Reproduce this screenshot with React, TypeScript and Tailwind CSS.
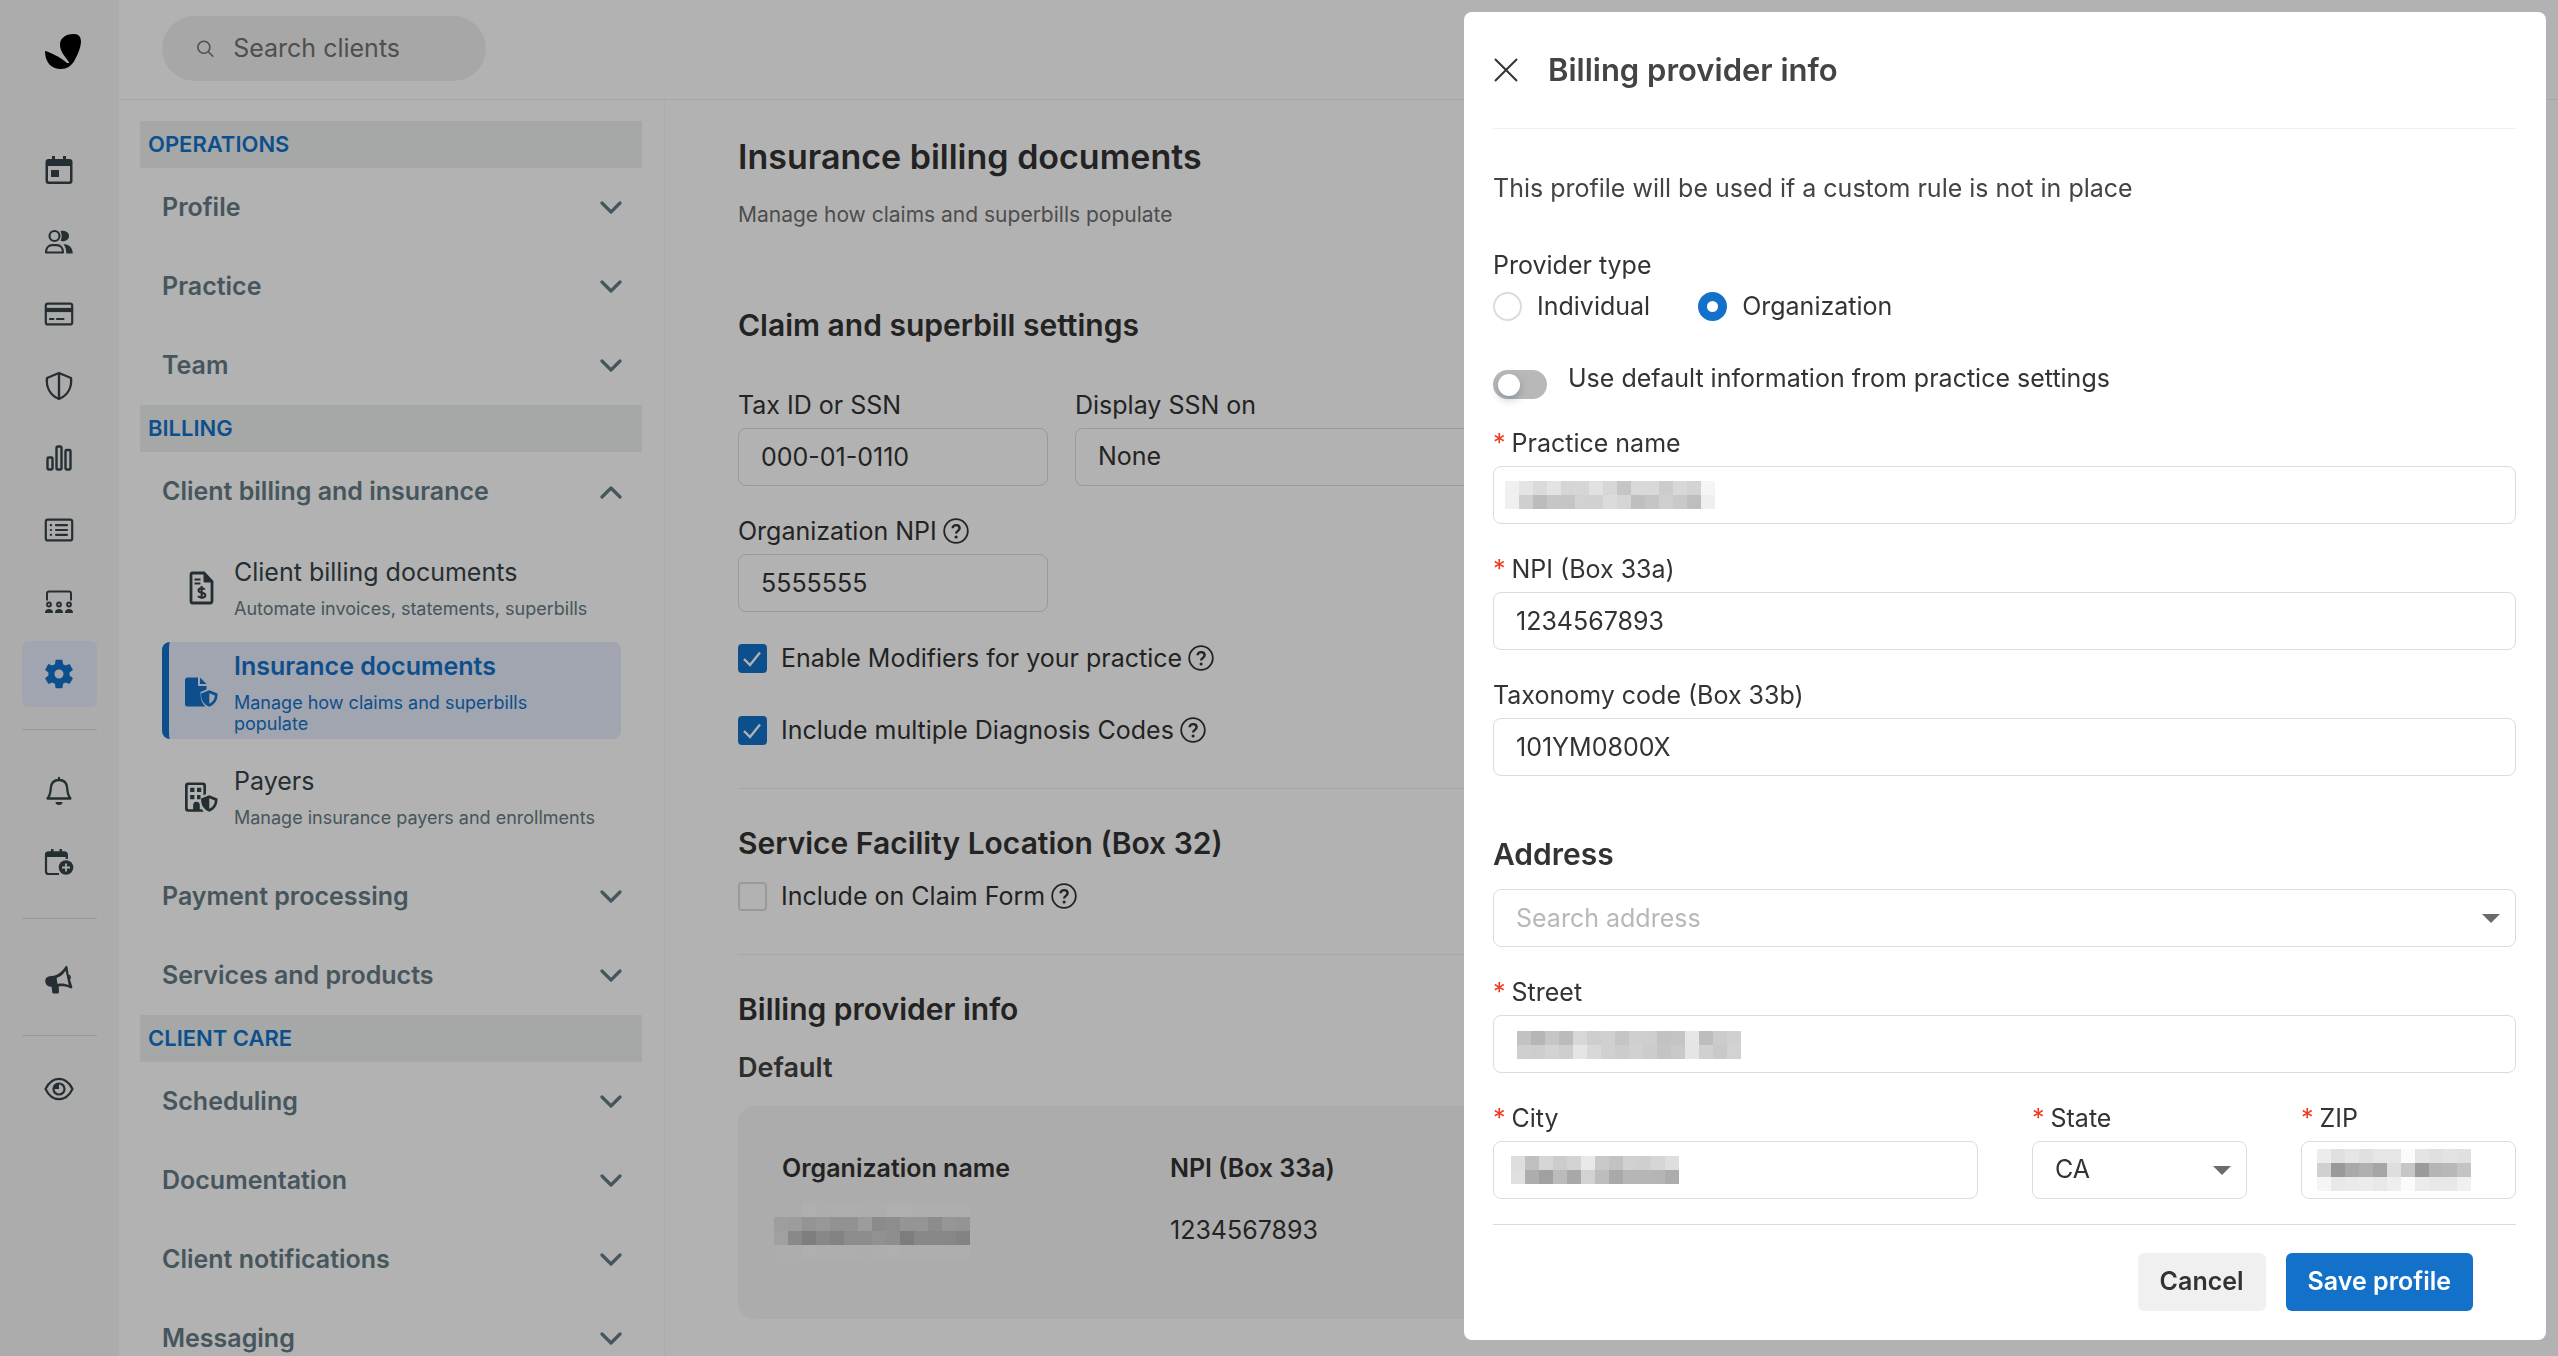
import React, { useState } from 'react';
import clsx from 'clsx';

interface IconProps {
  className?: string;
}

const LogoIcon = () => (
  <svg width="36" height="35" viewBox="0 0 36 35" fill="#000">
    <path d="M0 17C5 18 15 23 22 29L24.5 29C20 22 15 18 15 10.500C15 3 22 0 29 0C34 0 36 3 36 8C35.500 15 32 22 29 27.500C26 32 22 35 16 35C6 35 0 28 0 17Z" />
  </svg>
);

const SearchIcon = () => (
  <svg width="20" height="20" viewBox="0 0 20 20" fill="none" stroke="currentColor" strokeWidth="1.8">
    <circle cx="8" cy="8" r="7" />
    <path d="M13 13l6 6" />
  </svg>
);

const CalendarIcon = () => (
  <svg width="30" height="30" viewBox="0 0 30 30" fill="currentColor">
    <path fillRule="evenodd" d="M8 1h3v3h8V1h3v3h3.500A3 3 0 0 1 28.500 7v19a3 3 0 0 1-3 3h-21a3 3 0 0 1-3-3V7a3 3 0 0 1 3-3H8zM4 11v14.500a1 1 0 0 0 1 1h20a1 1 0 0 0 1-1V11z" />
    <rect x="7" y="15" width="8" height="7" />
  </svg>
);

const ClientsIcon = () => (
  <svg width="30" height="30" viewBox="0 0 30 30" fill="none" stroke="currentColor" strokeWidth="2.2">
    <circle cx="10.500" cy="9" r="5" />
    <path d="M2 25.500c0-5 3-7.300 6-7.300h5c3 0 6 2.300 6 7.300z" strokeLinejoin="round" />
    <path d="M16.500 4.200c2.500-1 8.500 0 8.500 4.800s-6 6-8.500 4.800c1.600-2.500 1.600-6.500 0-9.600zM19.500 17.200c5 0 9 2.500 9.300 9.400h-6.500c0-4-.8-7-2.800-9.400z" fill="currentColor" stroke="none" />
  </svg>
);

const CardIcon = () => (
  <svg width="30" height="30" viewBox="0 0 30 30" fill="none" stroke="currentColor" strokeWidth="2.200">
    <rect x="1.800" y="4.600" width="26.400" height="20.800" rx="2" />
    <path d="M2 11h26" strokeWidth="4.200" />
    <path d="M6 20h3.500M13 20h6.500" strokeLinecap="round" />
  </svg>
);

const ShieldIcon = () => (
  <svg width="30" height="30" viewBox="0 0 30 30" fill="none" stroke="currentColor" strokeWidth="2.400" strokeLinejoin="round">
    <path d="M15 2L27 7C28 16 24 24 15 28C6 24 2 16 3 7Z" />
    <path d="M15 2v26" />
  </svg>
);

const ChartIcon = () => (
  <svg width="30" height="30" viewBox="0 0 30 30" fill="none" stroke="currentColor" strokeWidth="2.400">
    <rect x="3.500" y="14.500" width="5" height="12" rx="1.200" />
    <rect x="12.500" y="3.500" width="5" height="23" rx="1.500" />
    <rect x="21.500" y="7" width="5" height="19.500" rx="1.200" />
  </svg>
);

const ListIcon = () => (
  <svg width="30" height="30" viewBox="0 0 30 30" fill="none" stroke="currentColor" strokeWidth="2.200" strokeLinecap="round">
    <rect x="1.800" y="4.600" width="26.400" height="20.800" rx="2" />
    <path d="M6.800 10.200h.3M6.800 15h.3M6.800 19.800h.3M12 10.200h11M12 15h11M12 19.800h11" />
  </svg>
);

const GroupIcon = () => (
  <svg width="30" height="30" viewBox="0 0 30 30" fill="none" stroke="currentColor" strokeWidth="2">
    <path d="M3 13.500V6.500q0-2 2-2h20q2 0 2 2v7" />
    <circle cx="5" cy="17.500" r="1.900" />
    <circle cx="15" cy="17.500" r="1.900" />
    <circle cx="25" cy="17.500" r="1.900" />
    <path d="M1 26c0-3 1.500-4 4-4s4 1 4 4zM11 26c0-3 1.500-4 4-4s4 1 4 4zM21 26c0-3 1.500-4 4-4s4 1 4 4z" fill="currentColor" stroke="none" />
  </svg>
);

const GearIcon = () => (
  <svg width="34" height="34" viewBox="0 0 24 24" fill="currentColor">
    <path d="M19.430 12.980c.040-.320.070-.640.070-.980s-.030-.660-.070-.980l2.110-1.650c.190-.150.240-.420.120-.640l-2-3.460c-.120-.220-.390-.300-.610-.220l-2.490 1c-.520-.400-1.080-.730-1.690-.980l-.380-2.650C14.460 2.180 14.250 2 14 2h-4c-.250 0-.460.180-.490.420l-.380 2.650c-.610.250-1.170.590-1.690.980l-2.490-1c-.230-.090-.490 0-.610.220l-2 3.460c-.130.220-.070.490.120.640l2.110 1.650c-.040.320-.070.650-.070.980s.030.660.070.980l-2.110 1.650c-.190.150-.240.420-.120.640l2 3.460c.120.220.390.300.610.220l2.490-1c.520.400 1.080.730 1.690.980l.380 2.650c.030.240.240.420.490.420h4c.250 0 .460-.180.490-.420l.380-2.650c.610-.250 1.170-.590 1.690-.980l2.490 1c.230.090.490 0 .610-.220l2-3.460c.120-.220.070-.490-.120-.640l-2.110-1.650zM12 15.200c-1.770 0-3.200-1.430-3.200-3.200s1.430-3.200 3.200-3.200 3.200 1.430 3.200 3.200-1.430 3.200-3.200 3.200z" />
  </svg>
);

const BellIcon = () => (
  <svg width="30" height="30" viewBox="0 0 30 30" fill="none" stroke="currentColor" strokeWidth="2.300" strokeLinejoin="round" strokeLinecap="round">
    <path d="M3.500 22.500C6.500 19 6.500 16 6.800 12C7.200 6.500 10.500 4 15 4s7.800 2.500 8.200 8c.3 4 .3 7 3.300 10.500zM15 2v2" />
    <path d="M11.500 26h7a3.500 3 0 0 1-7 0z" fill="currentColor" stroke="none" />
  </svg>
);

const CalendarPlusIcon = () => (
  <svg width="30" height="30" viewBox="0 0 30 30" fill="none" stroke="currentColor">
    <path d="M15 26H4.500Q2 26 2 23.500V6.500Q2 4.500 4.500 4.500H20Q22.800 4.500 22.800 7v4" strokeWidth="2.200" />
    <path d="M2 5q0-1.500 2-1.500h3V1h2.500v2.500h6V1H18v2.500h3q2.500 0 2.500 2.500v3H1z" fill="currentColor" stroke="none" />
    <circle cx="22" cy="19.500" r="7.300" fill="currentColor" stroke="none" />
    <path d="M22 15.500v8M18 19.500h8" stroke="#f7f7f7" strokeWidth="1.800" />
  </svg>
);

const MegaphoneIcon = () => (
  <svg width="30" height="30" viewBox="0 0 30 30" fill="currentColor">
    <path fillRule="evenodd" d="M21.500 1.200c.9-.5 1.900 0 2.100 1l1 7.300c2.300.7 3 3.500 1.400 5l2.300 7.300c.3 1.200-.8 2-1.900 1.500-4.200-2.100-8.200-2.400-11.700-1.700l.3 5.300c0 1.100-.6 1.600-1.600 1.600h-3.500c-1 0-1.600-.5-1.700-1.500l-.6-5.200c-3.300.2-5.700-1.500-6.200-4.500-.6-3.600 1-5.500 4.200-6l4-.6c5.100-.9 9.300-5 11.900-9.500zM12.600 12.900l1 6c4-.8 8-.2 11.200 1.200L21.600 5.700c-2.100 3.200-5 6.100-9 7.200z" />
  </svg>
);

const EyeIcon = () => (
  <svg width="30" height="30" viewBox="0 0 30 30" fill="none" stroke="currentColor" strokeWidth="2.200">
    <path d="M1.500 15C8 1.500 22 1.500 28.500 15C22 28.500 8 28.500 1.500 15Z" strokeLinejoin="round" />
    <circle cx="15" cy="15" r="5.500" />
    <path d="M15 15V9a6 6 0 0 0-6 6z" fill="currentColor" stroke="none" />
  </svg>
);

const InvoiceIcon = () => (
  <svg width="34" height="34" viewBox="0 0 34 34" fill="none" stroke="currentColor">
    <path d="M20 2H8.500Q7 2 7 4v26q0 2 1.500 2h17.500q2 0 2-2V10.500z" strokeWidth="2.800" />
    <path d="M20 1v10h9z" fill="currentColor" strokeWidth="1" />
    <path d="M10.500 8.500h6M10.500 12.500h6" strokeWidth="2.200" />
    <path d="M20.800 18.500c-1-1.500-6.300-1.800-6.300 1 0 3 6.800 1.500 6.800 4.700 0 3.200-6 2.800-7.300.8M17.600 15v13" strokeWidth="2.100" />
  </svg>
);

const FileShieldIcon = () => (
  <svg width="34" height="34" viewBox="0 0 34 34" fill="currentColor">
    <path d="M3.500 2.500H14v8.500h8.500v3.500l-6 2.500c0 5 .5 10.500 5 14.500h-18Q1 31.500 1 29V5Q1 2.500 3.500 2.500zM16 2.500l6.500 6.500H16z" />
    <path fillRule="evenodd" d="M25.300 15.300l8.200 3.200c.3 6-2.200 10.800-8.200 13.300-6-2.500-8.500-7.300-8.200-13.300zM25.300 18.200v10.500c3.700-2 5.500-4.500 5.500-8.300z" />
  </svg>
);

const BuildingShieldIcon = () => (
  <svg width="34" height="34" viewBox="0 0 34 34" fill="currentColor">
    <path fillRule="evenodd" d="M4 2.500h15q3 0 3 3v8.800l-2.600.9V6.500q0-1.400-1.400-1.400H5.200Q3.700 5.100 3.700 6.500v21.500q0 1.300 1.500 1.300h4V25.500a3.200 3.500 0 0 1 6.400 0v3.800h2.200l2 2.500H4q-3 0-3-3V5.500q0-3 3-3z" />
    <path d="M6.200 7.800h4.200V12H6.200zM13 7.800h4.200V12H13zM6.200 15h4.200v4.200H6.200zM13 15h3.500v4.200H13zM9.500 31v-6a3 3.200 0 0 1 6 0v6z" />
    <path fillRule="evenodd" d="M25.300 15.300l8.200 3.200c.3 6-2.200 10.800-8.200 13.300-6-2.500-8.500-7.300-8.200-13.300zM25.300 18.200v10.500c3.700-2 5.500-4.500 5.500-8.300z" />
  </svg>
);

const Chevron = ({ className }: IconProps) => (
  <svg className={className} width="22" height="14" viewBox="0 0 22 14" fill="none" stroke="currentColor" strokeWidth="3.200" strokeLinecap="round" strokeLinejoin="round">
    <path d="M2 2l9 9 9-9" />
  </svg>
);

const Caret = () => (
  <svg className="pointer-events-none absolute right-4 top-1/2 -mt-1" width="18" height="9" viewBox="0 0 18 9" fill="#6b6b6b">
    <path d="M0 0h18L9 9z" />
  </svg>
);

const HelpIcon = () => (
  <svg width="26" height="26" viewBox="0 0 26 26" fill="none" stroke="currentColor">
    <circle cx="13" cy="13" r="11.800" strokeWidth="1.800" />
    <path d="M9.600 10.300c0-4.300 7-4.300 7 0 0 2.600-3.500 2.600-3.500 5.200" strokeWidth="2.400" />
    <circle cx="13.100" cy="19" r="1.600" fill="currentColor" stroke="none" />
  </svg>
);

// Hidden values are shown as blocks of grey, one array per row
const Mosaic = ({ rows, className }: { rows: string[][]; className?: string }) => (
  <div className={clsx('pointer-events-none', className)} aria-hidden="true">
    {rows.map((row, i) => (
      <div key={i} className="flex">
        {row.map((color, j) => (
          <span key={j} className="size-[14px]" style={{ backgroundColor: `#${color}` }} />
        ))}
      </div>
    ))}
  </div>
);

const toRow = (colors: string) => colors.split(' ');

const orgRows = [
  toRow('f6f6f6 f6f6f6 fbfbfb f8f8f8 f9f9f9 fafafa f8f8f8 f8f8f8 fbfbfb fbfbfb fafafa f9f9f9 fafafa fafafa'),
  toRow('e3e3e3 e0e0e0 d5d5d5 dadada d2d2d2 d1d1d1 e0e0e0 c8c8c8 cbcbcb d6d6d6 d6d6d6 c9c9c9 d7d7d7 d4d4d4'),
  toRow('e6e6e6 c5c5c5 b5b5b5 c2c2c2 bbbbbb c9c9c9 c9c9c9 d0d0d0 cccccc b4b4b4 c3c3c3 c3c3c3 c2c2c2 bcbcbc'),
  toRow('f8f8f8 f8f8f8 fbfbfb f9f9f9 fafafa fafafa f8f8f8 f9f9f9 fbfbfb fafafa fafafa f9f9f9 fafafa fafafa'),
];
const practiceRows = [
  toRow('f0f0f0 e4e4e4 dadada e3e3e3 d5d5d5 d6d6d6 e1e1e1 d7d7d7 c5c5c5 d9d9d9 d9d9d9 cccccc d8d8d8 d3d3d3 f5f5f5'),
  toRow('f0f0f0 cfcfcf bcbcbc c6c6c6 c5c5c5 d2d2d2 d1d1d1 dbdbdb d5d5d5 bfbfbf c5c5c5 cfcfcf c9c9c9 bebebe efefef'),
];
const streetRows = [
  toRow('c2c2c2 b6b6b6 c6c6c6 bbbbbb d7d7d7 cecece d0d0d0 c5c5c5 cfcfcf cecece c2c2c2 c4c4c4 e6e6e6 bdbdbd cbcbcb d0d0d0'),
  toRow('cfcfcf cdcdcd d3d3d3 cecece e5e5e5 d8d8d8 d0d0d0 cccccc d1d1d1 cccccc c4c4c4 c9c9c9 e5e5e5 d0d0d0 c9c9c9 d2d2d2'),
];
const cityRows = [
  toRow('dedede c0c0c0 d6d6d6 cccccc d3d3d3 e9e9e9 c9c9c9 c2c2c2 d1d1d1 cfcfcf d6d6d6 dedede'),
  toRow('e0e0e0 adadad a0a0a0 bbbbbb a8a8a8 d2d2d2 bdbdbd a9a9a9 b6b6b6 b6b6b6 b5b5b5 acacac'),
];
const zipRows = [
  toRow('ececec e0e0e0 e6e6e6 e0e0e0 e6e6e6 e6e6e6 fbfbfb e4e4e4 e0e0e0 e3e3e3 e0e0e0'),
  toRow('d0d0d0 999999 a9a9a9 b0b0b0 a5a5a5 dedede c6c6c6 9a9a9a b5b5b5 b8b8b8 c4c4c4'),
  toRow('f5f5f5 e8e8e8 eaeaea ececec e8e8e8 eeeeee fbfbfb ebebeb e8e8e8 e8e8e8 f0f0f0'),
];

const mainNav = [
  { label: 'Calendar', icon: <CalendarIcon /> },
  { label: 'Clients', icon: <ClientsIcon /> },
  { label: 'Billing', icon: <CardIcon /> },
  { label: 'Insurance', icon: <ShieldIcon /> },
  { label: 'Analytics', icon: <ChartIcon /> },
  { label: 'Activity', icon: <ListIcon /> },
  { label: 'Team', icon: <GroupIcon /> },
  { label: 'Settings', icon: <GearIcon />, active: true },
];

const NavIcon = ({ label, icon, active }: { label: string; icon: React.ReactNode; active?: boolean }) => (
  <a
    href="#"
    aria-label={label}
    className={clsx(
      'flex h-[66px] w-full shrink-0 items-center justify-center rounded-md pr-px',
      active ? 'bg-[#e6edfb] text-[#1471ca]' : 'text-[#364449]'
    )}
  >
    {icon}
  </a>
);

const Sidebar = () => (
  <nav className="flex w-[119px] shrink-0 flex-col bg-[#f7f7f7] px-[22px]">
    <a href="#" aria-label="Home" className="mt-[34px] flex pl-[23px]">
      <LogoIcon />
    </a>
    <div className="mt-[68px] flex flex-col gap-[6px]">
      {mainNav.map((item) => (
        <NavIcon key={item.label} {...item} />
      ))}
    </div>
    <hr className="mb-7 mt-[22px] border-[#dcdcdc]" />
    <div className="flex flex-col gap-[6px]">
      <NavIcon label="Notifications" icon={<BellIcon />} />
      <NavIcon label="Requests" icon={<CalendarPlusIcon />} />
    </div>
    <hr className="mb-7 mt-[22px] border-[#dcdcdc]" />
    <NavIcon label="Announcements" icon={<MegaphoneIcon />} />
    <hr className="mb-5 mt-[22px] border-[#dcdcdc]" />
    <NavIcon label="Preview" icon={<EyeIcon />} />
  </nav>
);

const SectionTitle = ({ children }: { children: React.ReactNode }) => (
  <h3 className="flex h-[47px] items-center bg-[#edf1f0] px-2 text-[22px] font-semibold text-[#1471ca]">{children}</h3>
);

const SectionItem = ({ title, open }: { title: string; open?: boolean }) => (
  <button
    type="button"
    aria-expanded={!!open}
    className="flex h-[79px] w-full items-center justify-between pl-[22px] pr-5 text-[25px] font-semibold text-[#657b85]"
  >
    {title}
    <Chevron className={open ? 'rotate-180' : ''} />
  </button>
);

interface SubItemProps {
  title: string;
  text: string;
  icon: React.ReactNode;
  active?: boolean;
}

const SubItem = ({ title, text, icon, active }: SubItemProps) => (
  <a
    href="#"
    className={clsx(
      'flex items-center rounded-lg border-l-[7px] pb-[5px] pl-[15px] pr-5 pt-2',
      active ? 'border-[#1471ca] bg-[#e6edfb] text-[#1471ca]' : 'border-transparent text-[#364449]'
    )}
  >
    <span className="mr-4 shrink-0">{icon}</span>
    <span>
      <span className={clsx('block text-[25px] leading-[32px]', active && 'font-semibold')}>{title}</span>
      <span className={clsx('mt-[10px] block text-[18px] leading-[21px]', !active && 'text-[#657b85]')}>{text}</span>
    </span>
  </a>
);

const SettingsMenu = () => (
  <aside className="w-[546px] shrink-0 overflow-hidden border-r border-[#f7f7f7] pl-[21px] pr-[22px] pt-[21px]">
    <SectionTitle>OPERATIONS</SectionTitle>
    <SectionItem title="Profile" />
    <SectionItem title="Practice" />
    <SectionItem title="Team" />
    <SectionTitle>BILLING</SectionTitle>
    <SectionItem title="Client billing and insurance" open />
    <div className="flex flex-col gap-[18px] pb-6 pl-[22px] pr-[21px] pt-[17px]">
      <SubItem title="Client billing documents" text="Automate invoices, statements, superbills" icon={<InvoiceIcon />} />
      <SubItem title="Insurance documents" text="Manage how claims and superbills populate" icon={<FileShieldIcon />} active />
      <SubItem title="Payers" text="Manage insurance payers and enrollments" icon={<BuildingShieldIcon />} />
    </div>
    <SectionItem title="Payment processing" />
    <SectionItem title="Services and products" />
    <SectionTitle>CLIENT CARE</SectionTitle>
    <SectionItem title="Scheduling" />
    <SectionItem title="Documentation" />
    <SectionItem title="Client notifications" />
    <SectionItem title="Messaging" />
  </aside>
);

const inputClass =
  'h-[58px] w-full appearance-none rounded-lg border border-[#dcdcdc] bg-white px-[22px] text-[25px] text-[#333] placeholder:text-[#b8b8b8] outline-none';

interface FieldProps {
  id: string;
  label: string;
  required?: boolean;
  help?: boolean;
  className?: string;
  children: React.ReactNode;
}

const Field = ({ id, label, required, help, className, children }: FieldProps) => (
  <div className={className}>
    <label htmlFor={id} className="mb-[6px] flex h-[34px] items-center gap-[6px] text-[25px] leading-8">
      {required && <span className="text-[#ee3a1f]">*</span>}
      {label}
      {help && <HelpIcon />}
    </label>
    <div className="relative">{children}</div>
  </div>
);

const CheckRow = ({ id, label, checked }: { id: string; label: string; checked?: boolean }) => (
  <div className="flex items-center text-[25px] leading-8">
    <span className="relative flex size-[29px]">
      <input
        id={id}
        type="checkbox"
        defaultChecked={checked}
        className="size-[29px] appearance-none rounded-[4px] border-2 border-[#dcdcdc] bg-white checked:border-[#1471ca] checked:bg-[#1471ca]"
      />
      {checked && (
        <svg className="pointer-events-none absolute inset-0" width="29" height="29" viewBox="0 0 29 29" fill="none" stroke="#fff" strokeWidth="2.400">
          <path d="M6 15l6 6L22 8.500" />
        </svg>
      )}
    </span>
    <label htmlFor={id} className="ml-[14px] mr-[6px]">{label}</label>
    <HelpIcon />
  </div>
);

const MainContent = () => (
  <main className="flex-1 overflow-hidden pl-[73px] pr-[60px] pt-[35px] text-[#333]">
    <h1 className="text-[34px] font-semibold leading-[44px]">Insurance billing documents</h1>
    <p className="mt-[23px] text-[21px] leading-[26px] text-[#6f6f6f]">Manage how claims and superbills populate</p>

    <h2 className="mt-[77px] text-[30px] font-semibold leading-[40px]">Claim and superbill settings</h2>
    <div className="mt-[43px] grid grid-cols-[310px_640px] gap-x-[27px] gap-y-7">
      <Field id="tax-id" label="Tax ID or SSN">
        <input id="tax-id" className={inputClass} defaultValue="000-01-0110" />
      </Field>
      <Field id="display-ssn" label="Display SSN on">
        <select id="display-ssn" className={inputClass} defaultValue="None">
          <option>None</option>
        </select>
      </Field>
      <Field id="org-npi" label="Organization NPI" help>
        <input id="org-npi" className={inputClass} defaultValue="5555555" />
      </Field>
    </div>
    <div className="mt-[30px] flex flex-col gap-10">
      <CheckRow id="modifiers" label="Enable Modifiers for your practice" checked />
      <CheckRow id="diagnosis" label="Include multiple Diagnosis Codes" checked />
    </div>

    <hr className="mt-[42px] border-[#efefef]" />
    <h2 className="mt-[34px] text-[30px] font-semibold leading-[40px]">Service Facility Location (Box 32)</h2>
    <div className="mt-[17px]">
      <CheckRow id="claim-form" label="Include on Claim Form" />
    </div>

    <hr className="mt-[42px] border-[#efefef]" />
    <h2 className="mt-[34px] text-[30px] font-semibold leading-[40px]">Billing provider info</h2>
    <h3 className="mt-[21px] text-[27px] font-semibold leading-[36px] text-[#424242]">Default</h3>
    <div className="mt-5 rounded-2xl bg-[#f7f7f7] px-11 pb-[71px] pt-[44px]">
      <table className="text-left text-[25px] leading-[36px]">
        <thead>
          <tr>
            <th className="w-[388px] font-semibold">Organization name</th>
            <th className="font-semibold">NPI (Box 33a)</th>
          </tr>
        </thead>
        <tbody>
          <tr>
            <td className="relative pt-[26px]">
              <Mosaic rows={orgRows} className="absolute -left-2 bottom-[-11px]" />
            </td>
            <td className="pt-[26px]">1234567893</td>
          </tr>
        </tbody>
      </table>
    </div>
  </main>
);

const radioClass =
  'size-[29px] appearance-none rounded-full border-2 border-[#dcdcdc] bg-white checked:border-[9px] checked:border-[#1471ca]';

const ProviderDrawer = () => {
  const [providerType, setProviderType] = useState<'individual' | 'organization'>('organization');

  return (
    <section
      role="dialog"
      aria-label="Billing provider info"
      className="fixed bottom-4 right-3 top-3 flex w-[1082px] flex-col rounded-lg bg-white pl-[29px] pr-[30px] text-[#333]"
    >
      <header className="flex h-[117px] shrink-0 items-center border-b border-[#f0f0f0]">
        <button type="button" aria-label="Close" className="mr-[29px]">
          <svg width="26" height="26" viewBox="0 0 26 26" fill="none" stroke="#333" strokeWidth="2">
            <path d="M2 2l22 22M24 2L2 24" />
          </svg>
        </button>
        <h2 className="text-[31px] font-semibold leading-[40px] text-[#444]">Billing provider info</h2>
      </header>

      <form className="flex flex-1 flex-col">
        <p className="mt-[43px] text-[25px] leading-8 text-[#444]">This profile will be used if a custom rule is not in place</p>

        <fieldset className="mt-[45px] text-[25px] leading-8">
          <legend>Provider type</legend>
          <div className="mt-[9px] flex gap-[48px]">
            <label className="flex items-center gap-[15px]">
              <input
                type="radio"
                name="provider-type"
                className={radioClass}
                checked={providerType === 'individual'}
                onChange={() => setProviderType('individual')}
              />
              Individual
            </label>
            <label className="flex items-center gap-[15px]">
              <input
                type="radio"
                name="provider-type"
                className={radioClass}
                checked={providerType === 'organization'}
                onChange={() => setProviderType('organization')}
              />
              Organization
            </label>
          </div>
        </fieldset>

        <div className="mt-10 flex items-start">
          <button
            id="use-default"
            type="button"
            role="switch"
            aria-checked="false"
            className="mt-2 flex h-[29px] w-[54px] items-center rounded-full bg-[#b8b8b8] pl-[5px]"
          >
            <span className="size-[22px] rounded-full bg-white shadow-[0_4px_8px_rgba(0,35,80,0.25)]" />
          </button>
          <label htmlFor="use-default" className="ml-[21px] text-[25px] leading-8">
            Use default information from practice settings
          </label>
        </div>

        <div className="mt-[27px] flex flex-col gap-7">
          <Field id="practice" label="Practice name" required>
            <input id="practice" className={inputClass} />
            <Mosaic rows={practiceRows} className="absolute left-3 top-[15px]" />
          </Field>
          <Field id="npi" label="NPI (Box 33a)" required>
            <input id="npi" className={inputClass} defaultValue="1234567893" />
          </Field>
          <Field id="taxonomy" label="Taxonomy code (Box 33b)">
            <input id="taxonomy" className={inputClass} defaultValue="101YM0800X" />
          </Field>
        </div>

        <h3 className="mt-[58px] text-[30px] font-semibold leading-[40px]">Address</h3>
        <div className="relative mt-[15px]">
          <input aria-label="Search address" className={inputClass} placeholder="Search address" />
          <Caret />
        </div>
        <Field id="street" label="Street" required className="mt-7">
          <input id="street" className={inputClass} />
          <Mosaic rows={streetRows} className="absolute left-6 top-4" />
        </Field>
        <div className="mt-7 flex gap-[54px]">
          <Field id="city" label="City" required className="flex-1">
            <input id="city" className={inputClass} />
            <Mosaic rows={cityRows} className="absolute left-[18px] top-[15px]" />
          </Field>
          <Field id="state" label="State" required className="w-[215px]">
            <select id="state" className={inputClass} defaultValue="CA">
              <option>CA</option>
            </select>
            <Caret />
          </Field>
          <Field id="zip" label="ZIP" required className="w-[215px]">
            <input id="zip" className={inputClass} />
            <Mosaic rows={zipRows} className="absolute left-4 top-2" />
          </Field>
        </div>
      </form>

      <footer className="flex h-[116px] shrink-0 items-start justify-end gap-5 border-t border-[#dcdcdc] pr-[43px] pt-7">
        <button type="button" className="h-[58px] rounded-md bg-[#f0f0f0] px-[22px] text-[25px] font-semibold">
          Cancel
        </button>
        <button type="button" className="h-[58px] rounded-md bg-[#1471ca] px-[22px] text-[25px] font-semibold text-white">
          Save profile
        </button>
      </footer>
    </section>
  );
};

const App = () => {
  return (
    <div className="flex h-screen overflow-hidden bg-white font-['Inter',sans-serif]">
      <Sidebar />
      <div className="flex min-w-0 flex-1 flex-col">
        <header className="flex h-[100px] shrink-0 items-start border-b border-[#f0f0f0] pl-[43px] pt-4">
          <label className="flex h-[65px] w-[324px] items-center gap-[19px] rounded-full bg-[#f0f0f0] px-[35px] text-[#717171]">
            <SearchIcon />
            <input
              type="search"
              aria-label="Search clients"
              placeholder="Search clients"
              className="w-full min-w-0 bg-transparent text-[25px] outline-none placeholder:text-[#717171]"
            />
          </label>
        </header>
        <div className="flex min-h-0 flex-1">
          <SettingsMenu />
          <MainContent />
        </div>
      </div>
      <div className="fixed inset-0 bg-black/30" />
      <ProviderDrawer />
    </div>
  );
};

export default App;
